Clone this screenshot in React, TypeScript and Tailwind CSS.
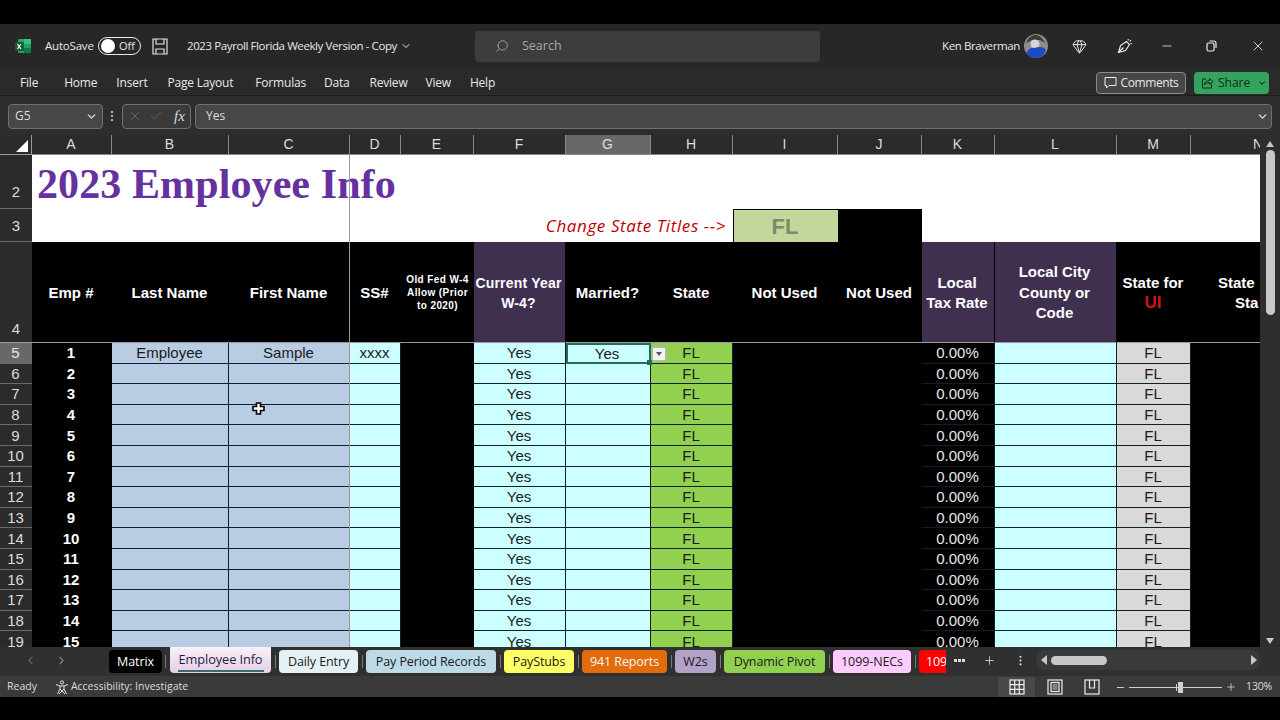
import { Check, ChevronDown, ChevronLeft, ChevronRight, Gem, Minus, MoreVertical, Plus, Search, X } from 'lucide-react';

const ui = 'font-["Open_Sans",sans-serif]';
const sheetFont = 'font-["Liberation_Sans",Arial,sans-serif]';

const menu = ['File', 'Home', 'Insert', 'Page Layout', 'Formulas', 'Data', 'Review', 'View', 'Help'];
const menuGaps = ['w-[26px]', 'w-[19px]', 'w-[20px]', 'w-[22px]', 'w-[18px]', 'w-[20px]', 'w-[18px]', 'w-[19px]', 'w-0'];

const columns = [
  { l: 'A', cls: '' },
  { l: 'B', cls: '' },
  { l: 'C', cls: '' },
  { l: 'D', cls: '' },
  { l: 'E', cls: '' },
  { l: 'F', cls: '' },
  { l: 'G', cls: 'bg-[#686868]' },
  { l: 'H', cls: '' },
  { l: 'I', cls: '' },
  { l: 'J', cls: '' },
  { l: 'K', cls: '' },
  { l: 'L', cls: '' },
  { l: 'M', cls: '' },
];

const rows = Array.from({ length: 15 }, (_, i) => i + 1);

const tabs = [
  { t: 'Matrix', w: 'w-[53px]', cls: 'bg-black text-white' },
  { t: 'Daily Entry', w: 'w-[79px]', cls: 'bg-[#e3f1f5] text-[#1a1a1a]' },
  { t: 'Pay Period Records', w: 'w-[130px]', cls: 'bg-[#bcdbe6] text-[#1a1a1a]' },
  { t: 'PayStubs', w: 'w-[70px]', cls: 'bg-[#ffff66] text-[#1a1a1a]' },
  { t: '941 Reports', w: 'w-[85px]', cls: 'bg-[#e36c0a] text-[#f5f5f5]' },
  { t: 'W2s', w: 'w-[41px]', cls: 'bg-[#b3a2c7] text-[#1a1a1a]' },
  { t: 'Dynamic Pivot', w: 'w-[101px]', cls: 'bg-[#92d050] text-[#1a1a1a]' },
  { t: '1099-NECs', w: 'w-[78px]', cls: 'bg-[#ffccff] text-[#1a1a1a]' },
];

function ExcelLogo() {
  return (
    <svg width="16" height="16" viewBox="0 0 16 16">
      <rect x="3" y="1" width="13" height="14" rx="1" fill="#21a366" />
      <rect x="9" y="1" width="7" height="5" fill="#33c481" />
      <rect x="9" y="10" width="7" height="5" fill="#107c41" />
      <rect x="0" y="4" width="9" height="9" rx="1" fill="#185c37" />
      <path d="M2.5 6l3.5 5M6 6l-3.5 5" stroke="#fff" strokeWidth="1.2" />
    </svg>
  );
}

function SaveIcon() {
  return (
    <svg width="16" height="17" viewBox="0 0 16 17" fill="none" stroke="#e4e4e4" strokeWidth="1.2">
      <path d="M1 1h14v15H1z" />
      <path d="M4 1v5h8V1M4 16v-5h8v5" />
    </svg>
  );
}

function Avatar() {
  return (
    <svg width="24" height="24" viewBox="0 0 24 24">
      <circle cx="12" cy="12" r="12" fill="#8d8d8d" />
      <path d="M2 9c3-7 7-8 10-8s7 3 9 8l-5-3H8z" fill="#3b3b3b" />
      <circle cx="11" cy="10" r="4.5" fill="#d9d2d2" />
      <path d="M2 19c3-5 6-6 9-5 3-1 8-2 11 2-2 6-6 8-10 8s-8-2-10-5z" fill="#1c4cc4" />
    </svg>
  );
}

function PenIcon() {
  return (
    <svg width="16" height="16" viewBox="0 0 16 16" fill="none" stroke="#eee" strokeWidth="1.1">
      <path d="M1.5 14.5l2-7 6-4 3 3-4 6z" />
      <path d="M1.5 14.5l5-5M11 1l.5 1.5M14 2l-1 1.5M15 5.5l-1.5.2" />
    </svg>
  );
}

function RestoreIcon() {
  return (
    <svg width="11" height="12" viewBox="0 0 11 12" fill="none" stroke="#eee" strokeWidth="1.2">
      <rect x="1" y="3" width="7" height="8" rx="1.5" />
      <path d="M3.5 1h4A2.5 2.5 0 0 1 10 3.5V8" />
    </svg>
  );
}

function ShareIcon() {
  return (
    <svg width="13" height="13" viewBox="0 0 13 13" fill="none" stroke="#0f2f1b" strokeWidth="1">
      <path d="M5 3H1.5v9h9V8" />
      <path d="M3.5 9c.3-3 2.2-4.5 5-4.5V2.5L12 5.5 8.5 8.5V6.5C6.5 6.5 4.8 7.2 3.5 9z" />
    </svg>
  );
}

function CommentIcon() {
  return (
    <svg width="13" height="13" viewBox="0 0 13 13" fill="none" stroke="#eee" strokeWidth="1">
      <path d="M1 1.5h11v8H5l-2.5 2.5V9.5H1z" />
    </svg>
  );
}

function AccessIcon() {
  return (
    <svg width="14" height="15" viewBox="0 0 14 15" fill="none" stroke="#e4e4e4" strokeWidth="1">
      <circle cx="7" cy="2.5" r="1.6" />
      <path d="M1 4.5l4 1.5h4l4-1.5M5 6v3L2.5 14M9 6v3l2.5 5M5 9l5 5M9 9l-5 5" />
    </svg>
  );
}

function PageLayoutIcon() {
  return (
    <svg width="16" height="16" viewBox="0 0 16 16" fill="none" stroke="#eee" strokeWidth="1.2">
      <rect x="1" y="1" width="14" height="14" />
      <rect x="4" y="3.5" width="8" height="9" />
      <path d="M5.5 6h5M5.5 8h5M5.5 10h5" strokeWidth="0.8" />
    </svg>
  );
}

function GridIcon() {
  return (
    <svg width="16" height="16" viewBox="0 0 16 16" fill="none" stroke="#eee" strokeWidth="1.2">
      <rect x="1" y="1" width="14" height="14" />
      <path d="M5.7 1v14M10.3 1v14M1 5.7h14M1 10.3h14" />
    </svg>
  );
}

function BreakIcon() {
  return (
    <svg width="16" height="16" viewBox="0 0 16 16" fill="none" stroke="#eee" strokeWidth="1.2">
      <rect x="1" y="1" width="14" height="14" />
      <path d="M5.5 1v8h5V1" />
    </svg>
  );
}

function HeaderCell({ children, purple }: { children: React.ReactNode; purple?: boolean }) {
  return (
    <div
      className={`flex items-center justify-center whitespace-nowrap border-b border-[#9a9a9a] pr-[2px] pt-[2px] text-center text-[15px] font-bold leading-[20.5px] text-white ${
        purple ? 'bg-[#40304f] border-r border-r-black' : 'bg-black'
      }`}
    >
      {children}
    </div>
  );
}

function Cell({ bg, children, dark }: { bg: string; children?: React.ReactNode; dark?: boolean }) {
  return (
    <div
      className={`flex items-center justify-center overflow-visible whitespace-nowrap border-b border-r border-[#10202a] pr-px text-[15px] leading-none ${bg} ${
        dark ? 'text-[#e8e8e8]' : 'text-[#1c1c1c]'
      }`}
    >
      {children}
    </div>
  );
}

export default function App() {
  return (
    <div className={`flex h-[720px] w-[1280px] flex-col overflow-hidden bg-black pb-[23px] pt-6 text-white ${ui}`}>
      {/* title bar */}
      <div className="flex h-[42px] shrink-0 items-center bg-[#272727] pl-[15px] pt-[2px] text-[11.5px] text-[#e8e8e8]">
        <ExcelLogo />
        <span className="ml-[14px] w-[47px] whitespace-nowrap tracking-[-0.2px]">AutoSave</span>
        <div className="ml-[6px] flex h-[18px] w-[43px] items-center rounded-full border border-[#e8e8e8] pl-[2px]">
          <div className="h-[14px] w-[14px] rounded-full bg-white" />
          <span className="ml-[4px] text-[11px]">Off</span>
        </div>
        <div className="ml-[11px]">
          <SaveIcon />
        </div>
        <span className="ml-[19px] w-[210px] whitespace-nowrap tracking-[-0.4px]">2023 Payroll Florida Weekly Version - Copy</span>
        <ChevronDown className="ml-[3px] h-3 w-3" strokeWidth={2} />
        <div className="ml-[63px] flex h-[31px] w-[345px] items-center rounded bg-[#3d3d3d] pl-[20px] text-[#a8a8a8]">
          <Search className="h-[14px] w-[14px] -scale-x-100" strokeWidth={1.5} />
          <span className="ml-[13px] text-[12.5px]">Search</span>
        </div>
        <span className="ml-[122px] w-[75px] whitespace-nowrap tracking-[-0.4px]">Ken Braverman</span>
        <div className="ml-[7px]">
          <Avatar />
        </div>
        <Gem className="ml-[24px] h-[15px] w-[15px] text-[#eee]" strokeWidth={1.5} />
        <div className="ml-[30px]">
          <PenIcon />
        </div>
        <Minus className="ml-[27px] h-[14px] w-[14px] text-[#ddd]" strokeWidth={1.5} />
        <div className="ml-[32px]">
          <RestoreIcon />
        </div>
        <X className="ml-[33px] h-[16px] w-[16px] text-[#eee]" strokeWidth={1.3} />
      </div>

      {/* ribbon tabs */}
      <div className="flex h-[30px] shrink-0 items-center border-b border-[#1c1c1c] bg-[#2a2a2a] pl-[20px] pr-[11px] pt-[4px] text-[12px] text-[#e8e8e8]">
        {menu.map((m, i) => (
          <div key={m} className="flex items-center whitespace-nowrap tracking-[-0.2px]">
            <span>{m}</span>
            <span className={menuGaps[i]} />
          </div>
        ))}
        <div className="ml-auto flex h-[22px] w-[90px] items-center justify-center gap-[4px] rounded border border-[#8a8a8a] bg-[#474747]">
          <CommentIcon />
          <span className="tracking-[-0.4px]">Comments</span>
        </div>
        <div className="ml-2 flex h-[22px] w-[75px] items-center rounded bg-[#33a35e] pl-[7px] text-[#0f2f1b]">
          <ShareIcon />
          <span className="ml-[4px]">Share</span>
          <ChevronDown className="ml-[7px] h-[10px] w-[10px]" strokeWidth={2.5} />
        </div>
      </div>

      {/* formula bar */}
      <div className="flex h-[39px] shrink-0 items-center bg-[#2d2d2d] pl-2 pr-2 pt-px text-[12px] text-[#dcdcdc]">
        <div className="flex h-[25px] w-[95px] items-center justify-between rounded border border-[#707070] bg-[#474747] pl-[6px] pr-[4px]">
          <span>G5</span>
          <ChevronDown className="h-[13px] w-[13px]" strokeWidth={2.5} />
        </div>
        <MoreVertical className="ml-[2px] h-[14px] w-[14px] text-[#bbb]" strokeWidth={2} />
        <div className="ml-[3px] flex h-[25px] w-[69px] items-center rounded border border-[#707070] bg-[#3a3a3a] pl-[5px] text-[#777]">
          <X className="h-[14px] w-[14px]" strokeWidth={1.2} />
          <Check className="ml-[7px] h-[14px] w-[14px]" strokeWidth={1.2} />
          <span className='ml-[11px] font-["Liberation_Serif",serif] text-[15px] italic text-[#dcdcdc]'>fx</span>
        </div>
        <div className="ml-1 flex h-[25px] min-w-0 flex-1 items-center justify-between rounded border border-[#707070] bg-[#474747] pl-[10px] pr-[2px]">
          <span>Yes</span>
          <ChevronDown className="h-[13px] w-[13px]" strokeWidth={2.5} />
        </div>
      </div>

      {/* sheet */}
      <div className="flex h-[512px] shrink-0">
        <div className={`relative h-[512px] w-[1260px] overflow-hidden ${sheetFont}`}>
          <div className="grid grid-cols-[32px_80px_117px_121px_51px_73px_92px_85px_82px_105px_84px_73px_122px_74px_69px] grid-rows-[20px_54px_33px_101px_repeat(15,20.6px)]">
            {/* column letters */}
            <div className="flex items-end justify-end border-b border-r border-[#9a9a9a] bg-[#2b2b2b] pb-[2px] pr-[3px]">
              <div className="h-0 w-0 border-b-[12px] border-l-[12px] border-b-white border-l-transparent" />
            </div>
            {columns.map((c) => (
              <div
                key={c.l}
                className={`flex items-center justify-center border-b border-r border-[#8a8a8a] pr-px text-[14px] text-[#dcdcdc] ${c.cls || 'bg-[#2b2b2b]'}`}
              >
                {c.l}
              </div>
            ))}
            <div className="flex items-center justify-start overflow-hidden border-b border-[#8a8a8a] bg-[#2b2b2b] pl-[62px] text-[14px] text-[#dcdcdc]">
              N
            </div>

            {/* title rows */}
            <div className="flex items-end justify-center border-b border-[#6a6a6a] bg-[#2b2b2b] pb-[5px] text-[15px] text-[#dcdcdc]">2</div>
            <div className='col-span-14 overflow-visible whitespace-nowrap bg-white pl-[5px] pt-[4px] font-["Liberation_Serif",serif] text-[42px] font-bold leading-[50px] tracking-[0.1px] text-[#6530a0]'>
              2023 Employee Info
            </div>

            <div className="flex items-center justify-center border-b border-[#6a6a6a] bg-[#2b2b2b] pt-[2px] text-[15px] text-[#dcdcdc]">3</div>
            <div className='col-span-8 flex items-center justify-end whitespace-nowrap bg-white pr-[7px] font-["Open_Sans",sans-serif] text-[17px] italic tracking-[0.6px] text-[#c00000]'>
              Change State Titles --&gt;
            </div>
            <div className="flex items-center justify-center border-l border-t border-black bg-[#c4d79b] pr-[2px] text-[22px] font-bold text-[#7f8a6c]">FL</div>
            <div className="bg-black" />
            <div className="col-span-4 bg-white" />

            {/* header row */}
            <div className="flex items-end justify-center border-b border-[#9a9a9a] bg-[#2b2b2b] pb-[2px] text-[15px] text-[#dcdcdc]">4</div>
            <HeaderCell>Emp #</HeaderCell>
            <HeaderCell>Last Name</HeaderCell>
            <HeaderCell>First Name</HeaderCell>
            <HeaderCell>SS#</HeaderCell>
            <div className="flex items-center justify-center whitespace-nowrap border-b border-[#9a9a9a] bg-black text-center text-[10px] font-bold leading-[13px] tracking-[0.4px] text-white">
              <span>
                Old Fed W-4
                <br />
                Allow (Prior
                <br />
                to 2020)
              </span>
            </div>
            <HeaderCell purple>
              <span className="text-[14px] tracking-[0.2px]">
                Current Year
                <br />
                W-4?
              </span>
            </HeaderCell>
            <HeaderCell>Married?</HeaderCell>
            <HeaderCell>State</HeaderCell>
            <HeaderCell>Not Used</HeaderCell>
            <HeaderCell>Not Used</HeaderCell>
            <HeaderCell purple>
              <span>
                Local
                <br />
                Tax Rate
              </span>
            </HeaderCell>
            <HeaderCell purple>
              <span>
                Local City
                <br />
                County or
                <br />
                Code
              </span>
            </HeaderCell>
            <HeaderCell>
              <span>
                State for
                <br />
                <span className="text-[17px] text-[#d01414]">UI</span>
              </span>
            </HeaderCell>
            <div className="flex items-center overflow-hidden whitespace-nowrap border-b border-[#9a9a9a] bg-black pl-[27px] pt-[2px] text-[15px] font-bold leading-[20.5px] text-white">
              <span>
                State
                <br />
                <span className="pl-[17px]">Sta</span>
              </span>
            </div>

            {/* data rows */}
            {rows.map((n) => (
              <div key={n} className="contents">
                <div
                  className={`flex items-center justify-center border-b border-[#6a6a6a] pr-px text-[15px] leading-none ${
                    n === 1 ? 'bg-[#686868] text-[#e8e8e8]' : 'bg-[#2b2b2b] text-[#dcdcdc]'
                  }`}
                >
                  {n + 4}
                </div>
                <div className="flex items-center justify-center border-b border-black bg-black pr-[2px] text-[15px] font-bold leading-none text-white">{n}</div>
                <Cell bg="bg-[#b8cce4]">{n === 1 ? 'Employee' : null}</Cell>
                <Cell bg="bg-[#b8cce4]">{n === 1 ? 'Sample' : null}</Cell>
                <Cell bg="bg-[#ccffff]">{n === 1 ? 'xxxx' : null}</Cell>
                <div className="bg-black" />
                <Cell bg="bg-[#ccffff]">Yes</Cell>
                {n === 1 ? (
                  <div className="relative flex items-center justify-center border-2 border-[#1d6f56] bg-[#ccffff] pr-[3px] text-[15px] leading-none text-[#1c1c1c]">
                    Yes
                    <div className="absolute -right-[17px] top-[2px] flex h-[14px] w-[14px] items-center justify-center border border-[#b8b8b8] bg-[#f2f2f2]">
                      <div className="h-0 w-0 border-x-[3px] border-t-[4px] border-x-transparent border-t-[#555]" />
                    </div>
                    <div className="absolute -bottom-[3px] -right-[3px] h-[5px] w-[5px] bg-[#1d6f56]" />
                  </div>
                ) : (
                  <Cell bg="bg-[#ccffff]" />
                )}
                <Cell bg="bg-[#92d050]">FL</Cell>
                <div className="bg-black" />
                <div className="bg-black" />
                <Cell bg="bg-black" dark>
                  0.00%
                </Cell>
                <Cell bg="bg-[#ccffff]" />
                <Cell bg="bg-[#d9d9d9]">FL</Cell>
                <div className="bg-black" />
              </div>
            ))}
          </div>

          {/* freeze pane line */}
          <div className="absolute bottom-0 left-[349px] top-[20px] w-px bg-[#9a9a9a]" />
          {/* mouse cursor */}
          <svg className="absolute left-[252px] top-[267px]" width="13" height="13" viewBox="0 0 13 13">
            <path d="M4.5 1h4v3.5H12v4H8.5V12h-4V8.5H1v-4h3.5z" fill="#fff" stroke="#000" strokeWidth="1.6" />
          </svg>
        </div>

        {/* vertical scrollbar */}
        <div className="flex w-5 flex-col items-center bg-[#2e2e2e]">
          <div className="mt-[6px] h-0 w-0 border-x-[4px] border-b-[6px] border-x-transparent border-b-[#c8c8c8]" />
          <div className="mt-[3px] h-[165px] w-[9px] rounded-full bg-[#c8c8c8]" />
          <div className="mt-auto mb-[3px] h-0 w-0 border-x-[4px] border-t-[6px] border-x-transparent border-t-[#c8c8c8]" />
        </div>
      </div>

      {/* sheet tabs */}
      <div className="flex h-[29px] shrink-0 items-start bg-[#303030] text-[12.5px] tracking-[-0.1px]">
        <div className="flex h-[26px] w-[109px] shrink-0 items-center pl-[24px] text-[#9a9a9a]">
          <ChevronLeft className="h-[13px] w-[13px]" strokeWidth={1.5} />
          <ChevronRight className="ml-[18px] h-[13px] w-[13px] text-[#ddd]" strokeWidth={1.5} />
        </div>
        <div className="flex w-[837px] shrink-0 overflow-hidden pt-[3px]">
          <div className={`flex h-[23px] shrink-0 items-center justify-center rounded pt-px ${tabs[0].w} ${tabs[0].cls}`}>{tabs[0].t}</div>
          <div className="mx-[3px] mt-[5px] h-[13px] w-px shrink-0 bg-[#777]" />
          <div className="-mt-[3px] ml-[1px] flex h-[26px] w-[101px] shrink-0 flex-col items-center rounded-b bg-gradient-to-b from-[#f7f2f7] to-[#e4cfe4] pt-[3px] text-[12.8px] text-[#2a1a4a]">
            <span>Employee Info</span>
            <div className="mt-px h-[2px] w-[86px] bg-[#3f6b70]" />
          </div>
          {tabs.slice(1).map((t) => (
            <div key={t.t} className="flex shrink-0 items-center">
              <div className="ml-[4px] mr-[3px] h-[13px] w-px bg-[#777]" />
              <div className={`flex h-[23px] items-center justify-center rounded pt-px ${t.w} ${t.cls}`}>{t.t}</div>
            </div>
          ))}
          <div className="flex shrink-0 items-center">
            <div className="ml-[4px] mr-[3px] h-[13px] w-px bg-[#777]" />
            <div className="flex h-[23px] w-[40px] items-center rounded-l bg-[#ff0000] pl-[7px] pt-px text-white">1099</div>
          </div>
        </div>
        <div className="flex h-[26px] flex-1 items-center pl-[8px] text-[#ddd]">
          <span className="flex gap-[1px]">
            <i className="h-[3px] w-[3px] bg-[#ddd]" />
            <i className="h-[3px] w-[3px] bg-[#ddd]" />
            <i className="h-[3px] w-[3px] bg-[#ddd]" />
          </span>
          <Plus className="ml-[18px] h-[13px] w-[13px]" strokeWidth={1.5} />
          <MoreVertical className="ml-[18px] h-[13px] w-[13px]" strokeWidth={2} />
          <div className="ml-[9px] flex h-[20px] w-[224px] items-center rounded-full bg-[#3a3a3a] pl-[5px] pr-[3px]">
            <div className="h-0 w-0 border-y-[5px] border-r-[6px] border-y-transparent border-r-[#c8c8c8]" />
            <div className="ml-[4px] h-[9px] w-[56px] rounded-full bg-[#c8c8c8]" />
            <div className="ml-auto h-0 w-0 border-y-[5px] border-l-[6px] border-y-transparent border-l-[#c8c8c8]" />
          </div>
        </div>
      </div>

      {/* status bar */}
      <div className="flex h-[21px] shrink-0 items-center bg-[#3a3a3a] pl-[7px] pt-px text-[10.5px] text-[#dcdcdc]">
        <span>Ready</span>
        <div className="ml-[18px]">
          <AccessIcon />
        </div>
        <span className="ml-[2px]">Accessibility: Investigate</span>
        <div className="ml-auto flex h-full w-[37px] items-center justify-center bg-[#484848]">
          <GridIcon />
        </div>
        <div className="ml-[12px]">
          <PageLayoutIcon />
        </div>
        <div className="ml-[21px]">
          <BreakIcon />
        </div>
        <Minus className="ml-[15px] h-[11px] w-[11px]" strokeWidth={2} />
        <div className="relative ml-[3px] h-px w-[93px] bg-[#cfcfcf]">
          <div className="absolute left-[47px] top-[-3px] h-[7px] w-px bg-[#cfcfcf]" />
          <div className="absolute left-[49px] top-[-5px] h-[11px] w-[5px] bg-[#cfcfcf]" />
        </div>
        <Plus className="ml-[3px] h-[12px] w-[12px]" strokeWidth={1.5} />
        <span className="ml-[9px] pr-[8px] tracking-[-0.2px]">130%</span>
      </div>
    </div>
  );
}
